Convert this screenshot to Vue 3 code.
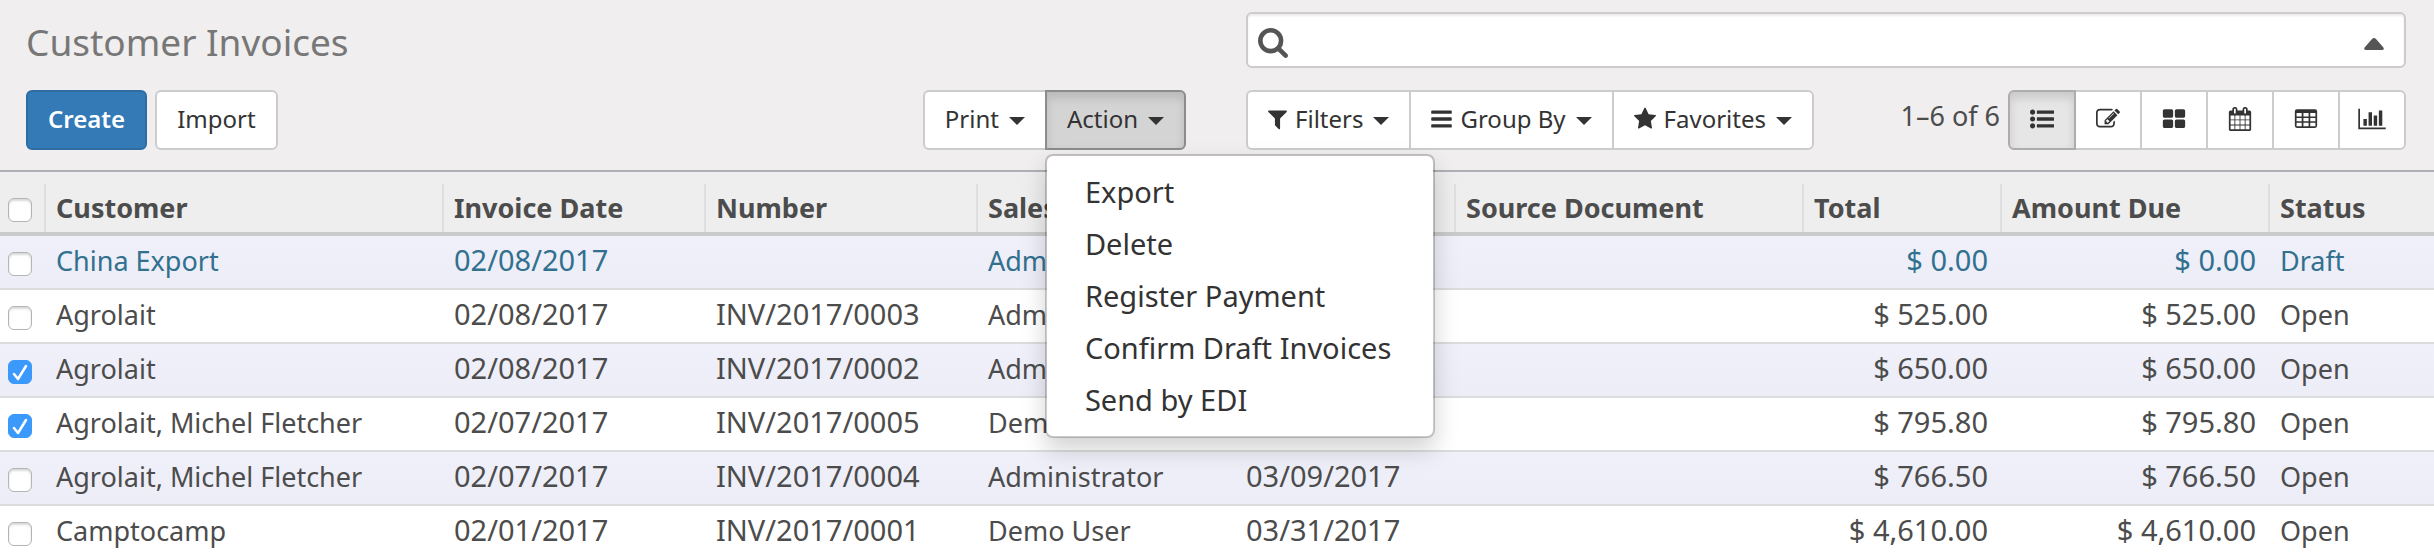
<script setup>
import { ref } from 'vue'

const views = [
  {
    name: 'List',
    box: '0 0 1792 1792',
    width: 24,
    path: 'M384 1408q0 80-56 136t-136 56-136-56-56-136 56-136 136-56 136 56 56 136zm0-512q0 80-56 136t-136 56-136-56-56-136 56-136 136-56 136 56 56 136zm0-512q0 80-56 136t-136 56-136-56-56-136 56-136 136-56 136 56 56 136zM544 1280h1216q32 0 32 32v192q0 32-32 32h-1216q-32 0-32-32v-192q0-32 32-32zm0-512h1216q32 0 32 32v192q0 32-32 32h-1216q-32 0-32-32v-192q0-32 32-32zm0-512h1216q32 0 32 32v192q0 32-32 32h-1216q-32 0-32-32v-192q0-32 32-32z',
  },
  {
    name: 'Form',
    box: '0 0 1792 1792',
    width: 24,
    path: 'M888 1184l116-116-152-152-116 116v56h96v96h56zm440-720q-16-16-33 1l-350 350q-17 17-1 33t33-1l350-350q17-17 1-33zm80 594v190q0 119-84.5 203.5t-203.5 84.5h-832q-119 0-203.5-84.5t-84.5-203.5v-832q0-119 84.5-203.5t203.5-84.5h832q63 0 117 25 15 7 18 23 3 17-9 29l-49 49q-14 14-32 8-23-6-45-6h-832q-66 0-113 47t-47 113v832q0 66 47 113t113 47h832q66 0 113-47t47-113v-126q0-13 9-22l64-64q15-15 35-7t20 29zm-96-738l288 288-672 672h-288v-288zm444 132l-92 92-288-288 92-92q28-28 68-28t68 28l152 152q28 28 28 68t-28 68z',
  },
  {
    name: 'Kanban',
    box: '0 0 1792 1792',
    width: 24,
    path: 'M832 1056v384q0 52-38 90t-90 38h-512q-52 0-90-38t-38-90v-384q0-52 38-90t90-38h512q52 0 90 38t38 90zm0-768v384q0 52-38 90t-90 38h-512q-52 0-90-38t-38-90v-384q0-52 38-90t90-38h512q52 0 90 38t38 90zm896 768v384q0 52-38 90t-90 38h-512q-52 0-90-38t-38-90v-384q0-52 38-90t90-38h512q52 0 90 38t38 90zm0-768v384q0 52-38 90t-90 38h-512q-52 0-90-38t-38-90v-384q0-52 38-90t90-38h512q52 0 90 38t38 90z',
  },
  {
    name: 'Calendar',
    box: '0 0 1792 1792',
    width: 24,
    path: 'M192 1664h288v-288h-288v288zm352 0h320v-288h-320v288zm-352-352h288v-320h-288v320zm352 0h320v-320h-320v320zm-352-384h288v-288h-288v288zm736 736h320v-288h-320v288zm-384-736h320v-288h-320v288zm768 736h288v-288h-288v288zm-384-352h320v-320h-320v320zm-352-864v-288q0-13-9.500-22.500t-22.500-9.500h-64q-13 0-22.500 9.500t-9.500 22.500v288q0 13 9.500 22.500t22.500 9.500h64q13 0 22.500-9.500t9.500-22.500zm736 864h288v-320h-288v320zm-384-384h320v-288h-320v288zm384 0h288v-288h-288v288zm32-480v-288q0-13-9.500-22.500t-22.500-9.500h-64q-13 0-22.500 9.500t-9.500 22.500v288q0 13 9.500 22.500t22.500 9.500h64q13 0 22.500-9.500t9.500-22.500zm384-64v1280q0 52-38 90t-90 38h-1408q-52 0-90-38t-38-90v-1280q0-52 38-90t90-38h128v-96q0-66 47-113t113-47h64q66 0 113 47t47 113v96h384v-96q0-66 47-113t113-47h64q66 0 113 47t47 113v96h128q52 0 90 38t38 90z',
  },
  {
    name: 'Pivot',
    box: '0 0 1792 1792',
    width: 24,
    path: 'M224 160h1344q160 0 160 160v1088q0 160-160 160h-1344q-160 0-160-160v-1088q0-160 160-160zM192 448v256h384v-256zM704 448v256h384v-256zM1216 448v256h384v-256zM192 816v256h384v-256zM704 816v256h384v-256zM1216 816v256h384v-256zM192 1184v256h384v-256zM704 1184v256h384v-256zM1216 1184v256h384v-256z',
  },
  {
    name: 'Graph',
    box: '0 0 2048 1792',
    width: 28,
    path: 'M640 896v512h-256v-512h256zm384-512v1024h-256v-1024h256zm1024 1152v128h-2048v-1536h128v1408h1920zm-640-896v768h-256v-768h256zm384-384v1152h-256v-1152h256z',
  },
]

const searchMenus = [
  {
    label: 'Filters',
    box: '192 0 1408 1792',
    width: 19,
    path: 'M1595 295q17 41-14 70l-493 493v742q0 42-39 59-13 5-25 5-27 0-45-19l-256-256q-19-19-19-45v-486l-493-493q-31-29-14-70 17-39 59-39h1280q42 0 59 39z',
  },
  {
    label: 'Group By',
    box: '128 0 1536 1792',
    width: 21,
    path: 'M192 256h1408q64 0 64 64v128q0 64-64 64h-1408q-64 0-64-64v-128q0-64 64-64zM192 768h1408q64 0 64 64v128q0 64-64 64h-1408q-64 0-64-64v-128q0-64 64-64zM192 1280h1408q64 0 64 64v128q0 64-64 64h-1408q-64 0-64-64v-128q0-64 64-64z',
  },
  {
    label: 'Favorites',
    box: '64 0 1664 1792',
    width: 22,
    path: 'M1728 647q0 22-26 48l-363 354 86 500q1 7 1 20 0 21-10.500 35.500t-30.500 14.500q-19 0-40-12l-449-236-449 236q-22 12-40 12-21 0-31.500-14.500t-10.500-35.500q0-6 2-20l86-500-364-354q-25-27-25-48 0-37 56-46l502-73 225-455q19-41 49-41t49 41l225 455 502 73q56 9 56 46z',
  },
]

const actions = ['Export', 'Delete', 'Register Payment', 'Confirm Draft Invoices', 'Send by EDI']

const columns = ['Customer', 'Invoice Date', 'Number', 'Salesperson', 'Due Date', 'Source Document', 'Total', 'Amount Due', 'Status']

const allSelected = ref(false)
const query = ref('')
const invoices = ref([
  { id: 1, checked: false, customer: 'China Export', date: '02/08/2017', number: '', user: 'Administrator', due: '', source: '', total: '$ 0.00', residual: '$ 0.00', status: 'Draft' },
  { id: 2, checked: false, customer: 'Agrolait', date: '02/08/2017', number: 'INV/2017/0003', user: 'Administrator', due: '', source: '', total: '$ 525.00', residual: '$ 525.00', status: 'Open' },
  { id: 3, checked: true, customer: 'Agrolait', date: '02/08/2017', number: 'INV/2017/0002', user: 'Administrator', due: '', source: '', total: '$ 650.00', residual: '$ 650.00', status: 'Open' },
  { id: 4, checked: true, customer: 'Agrolait, Michel Fletcher', date: '02/07/2017', number: 'INV/2017/0005', user: 'Demo User', due: '', source: '', total: '$ 795.80', residual: '$ 795.80', status: 'Open' },
  { id: 5, checked: false, customer: 'Agrolait, Michel Fletcher', date: '02/07/2017', number: 'INV/2017/0004', user: 'Administrator', due: '03/09/2017', source: '', total: '$ 766.50', residual: '$ 766.50', status: 'Open' },
  { id: 6, checked: false, customer: 'Camptocamp', date: '02/01/2017', number: 'INV/2017/0001', user: 'Demo User', due: '03/31/2017', source: '', total: '$ 4,610.00', residual: '$ 4,610.00', status: 'Open' },
])
</script>

<template>
  <div class="page">
    <header class="panel">
      <h1 class="title">Customer Invoices</h1>

      <div class="search">
        <svg class="search-icon" viewBox="64 128 1664 1664" aria-hidden="true">
          <path d="M1216 832q0-185-131.500-316.500t-316.500-131.500-316.500 131.500-131.500 316.500 131.500 316.500 316.500 131.500 316.500-131.500 131.500-316.500zm512 832q0 52-38 90t-90 38q-54 0-90-38l-343-342q-179 124-399 124-143 0-273.500-55.500t-225-150-150-225-55.500-273.500 55.500-273.500 150-225 225-150 273.500-55.500 273.500 55.500 225 150 150 225 55.500 273.500q0 220-124 399l343 343q37 37 37 90z" />
        </svg>
        <input v-model="query" class="search-input" type="text" aria-label="Search" />
        <button class="search-toggle" type="button" aria-label="Toggle search options">
          <svg width="20" height="12" viewBox="0 0 20 12" aria-hidden="true"><path d="M10 0q1 0 2 1l7 8q2 3-1 3H2q-3 0-1-3l7-8q1-1 2-1z" /></svg>
        </button>
      </div>

      <div class="bar">
        <div class="buttons">
          <button class="btn primary" type="button">Create</button>
          <button class="btn" type="button">Import</button>
        </div>
        <div class="group">
          <button class="btn" type="button">Print<span class="caret"></span></button>
          <div class="dropdown">
            <button class="btn pressed" type="button" aria-expanded="true">Action<span class="caret"></span></button>
            <ul class="menu">
              <li v-for="action in actions" :key="action"><a class="menu-item" href="#">{{ action }}</a></li>
            </ul>
          </div>
        </div>
      </div>

      <div class="bar">
        <div class="group">
          <button v-for="menu in searchMenus" :key="menu.label" class="btn" type="button">
            <svg :width="menu.width" height="24" :viewBox="menu.box" aria-hidden="true"><path :d="menu.path" /></svg>
            {{ menu.label }}<span class="caret"></span>
          </button>
        </div>
        <div class="pager">
          <span class="range">1–6 of 6</span>
          <div class="group">
            <button v-for="(view, i) in views" :key="view.name" class="btn view" :class="{ active: i === 0 }" type="button" :aria-label="view.name">
              <svg :width="view.width" height="24" :viewBox="view.box" aria-hidden="true"><path fill-rule="evenodd" :d="view.path" /></svg>
            </button>
          </div>
        </div>
      </div>
    </header>

    <table class="list">
      <colgroup>
        <col class="c-check" /><col class="c-customer" /><col class="c-date" /><col class="c-number" /><col class="c-user" />
        <col class="c-due" /><col class="c-source" /><col class="c-total" /><col class="c-residual" /><col class="c-status" />
      </colgroup>
      <thead>
        <tr>
          <th class="select"><input v-model="allSelected" class="check" type="checkbox" aria-label="Select all" /></th>
          <th v-for="column in columns" :key="column" class="head" scope="col">{{ column }}</th>
        </tr>
      </thead>
      <tbody>
        <tr v-for="inv in invoices" :key="inv.id" :class="{ draft: inv.status === 'Draft' }">
          <td class="select"><input v-model="inv.checked" class="check" type="checkbox" :aria-label="'Select ' + inv.customer" /></td>
          <td>{{ inv.customer }}</td>
          <td class="figure">{{ inv.date }}</td>
          <td class="figure">{{ inv.number }}</td>
          <td>{{ inv.user }}</td>
          <td class="figure">{{ inv.due }}</td>
          <td>{{ inv.source }}</td>
          <td class="figure amount">{{ inv.total }}</td>
          <td class="figure amount">{{ inv.residual }}</td>
          <td>{{ inv.status }}</td>
        </tr>
      </tbody>
    </table>
  </div>
</template>

<style>
body {
  background: #fff;
}
</style>

<style scoped>
.page {
  height: 100vh;
  overflow: hidden;
  font-family: "Noto Sans", "Open Sans", sans-serif;
  font-size: 27px;
  color: #4c4c4c;
}

.panel {
  display: grid;
  grid-template-columns: 1fr 1fr;
  gap: 22px 60px;
  padding: 12px 28px 20px 26px;
  background: #f0eeee;
  border-bottom: 2px solid #afafb6;
}

.title {
  margin: 0;
  padding-top: 4px;
  font-size: 37px;
  font-weight: 400;
  line-height: 52px;
  color: #777;
}

.search {
  display: flex;
  align-items: center;
  box-sizing: border-box;
  height: 56px;
  padding: 0 20px 0 10px;
  background: #fff;
  border: 2px solid #ccc;
  border-radius: 6px;
  box-shadow: inset 0 2px 2px rgba(0, 0, 0, 0.075);
}

.search-icon {
  width: 30px;
  height: 30px;
  margin-top: 6px;
  fill: #555;
}

.search-input {
  flex: 1;
  min-width: 0;
  height: 40px;
  margin: 0 10px;
  padding: 0;
  border: 0;
  outline: 0;
  background: transparent;
  font: inherit;
  color: inherit;
}

.search-toggle {
  display: flex;
  padding: 8px 0 0;
  border: 0;
  background: transparent;
  fill: #555;
}

.bar,
.buttons,
.group,
.pager {
  display: flex;
}

.bar {
  justify-content: space-between;
}

.buttons {
  gap: 8px;
}

.btn {
  display: flex;
  align-items: center;
  justify-content: center;
  gap: 8px;
  box-sizing: border-box;
  height: 60px;
  margin: 0;
  padding: 0 20px 2px;
  border: 2px solid #ccc;
  border-radius: 6px;
  background: #fff;
  font-family: inherit;
  font-size: 24px;
  line-height: 32px;
  color: #333;
  fill: #333;
  white-space: nowrap;
}

.primary {
  background: #337ab7;
  border-color: #2e6da4;
  color: #fff;
  font-weight: 600;
}

.group > * + * {
  margin-left: -2px;
}

.group > .btn:not(:first-child),
.dropdown .btn {
  border-top-left-radius: 0;
  border-bottom-left-radius: 0;
}

.group > .btn:not(:last-child) {
  border-top-right-radius: 0;
  border-bottom-right-radius: 0;
}

.pressed {
  background: #d4d4d4;
  border-color: #8c8c8c;
  box-shadow: inset 0 6px 10px rgba(0, 0, 0, 0.125);
}

.caret {
  margin: 4px 0 0 2px;
  border-top: 8px solid #333;
  border-left: 8px solid transparent;
  border-right: 8px solid transparent;
}

.dropdown {
  position: relative;
}

.menu {
  position: absolute;
  top: 64px;
  left: 0;
  z-index: 10;
  box-sizing: border-box;
  min-width: 390px;
  margin: 0;
  padding: 10px 0;
  list-style: none;
  background: #fff;
  background-clip: padding-box;
  border: 2px solid rgba(0, 0, 0, 0.2);
  border-radius: 8px;
  box-shadow: 0 12px 24px rgba(0, 0, 0, 0.175);
}

.menu-item {
  display: block;
  padding: 0 38px;
  font-size: 29px;
  line-height: 52px;
  color: #333;
  text-decoration: none;
  white-space: nowrap;
}

.pager {
  gap: 8px;
}

.range {
  line-height: 52px;
}

.view {
  width: 68px;
  padding: 0 0 2px;
}

.active {
  position: relative;
  background: #e6e6e6;
  border-color: #adadad;
  box-shadow: inset 0 6px 10px rgba(0, 0, 0, 0.125);
}

.list {
  width: 100%;
  table-layout: fixed;
  border-spacing: 0;
  line-height: 36px;
}

.c-check { width: 44px; }
.c-customer { width: 398px; }
.c-date { width: 262px; }
.c-number { width: 272px; }
.c-user { width: 258px; }
.c-due { width: 220px; }
.c-source { width: 348px; }
.c-total { width: 198px; }
.c-residual { width: 268px; }
.c-status { width: 166px; }

th {
  padding: 18px 12px 6px;
  background-color: #eee;
  border-bottom: 4px solid #cacaca;
  font-weight: 700;
  text-align: left;
  white-space: nowrap;
}

.head {
  background-image: linear-gradient(#dfdfdf, #dfdfdf);
  background-repeat: no-repeat;
  background-position: 0 12px;
  background-size: 2px 100%;
}

td {
  height: 36px;
  padding: 6px 12px 9px;
  border-bottom: 2px solid #dcdcdc;
  vertical-align: baseline;
  white-space: nowrap;
}

tbody tr {
  height: 54px;
}

tbody tr:nth-child(odd) {
  background: linear-gradient(#f0f0fa, #ecedf6);
}

.figure {
  font-size: 29px;
}

.amount {
  text-align: right;
}

.draft {
  color: #31708f;
}

td.select,
th.select {
  padding: 16px 8px 0;
  vertical-align: top;
}

th.select {
  padding-top: 26px;
}

.check {
  appearance: none;
  display: block;
  box-sizing: border-box;
  width: 24px;
  height: 24px;
  margin: 0;
  background: #fff;
  border: 1px solid #b4b4b4;
  border-radius: 6px;
  box-shadow: inset 0 2px 2px rgba(0, 0, 0, 0.15);
}

.check:checked {
  border-color: #3b99fc;
  background: #3b99fc url("data:image/svg+xml,%3Csvg xmlns='http://www.w3.org/2000/svg' viewBox='0 0 22 22'%3E%3Cpath d='M5 13l4 5 8-13' fill='none' stroke='white' stroke-width='2.500' stroke-linecap='round' stroke-linejoin='round'/%3E%3C/svg%3E") center / 22px 22px no-repeat;
  box-shadow: none;
}
</style>
